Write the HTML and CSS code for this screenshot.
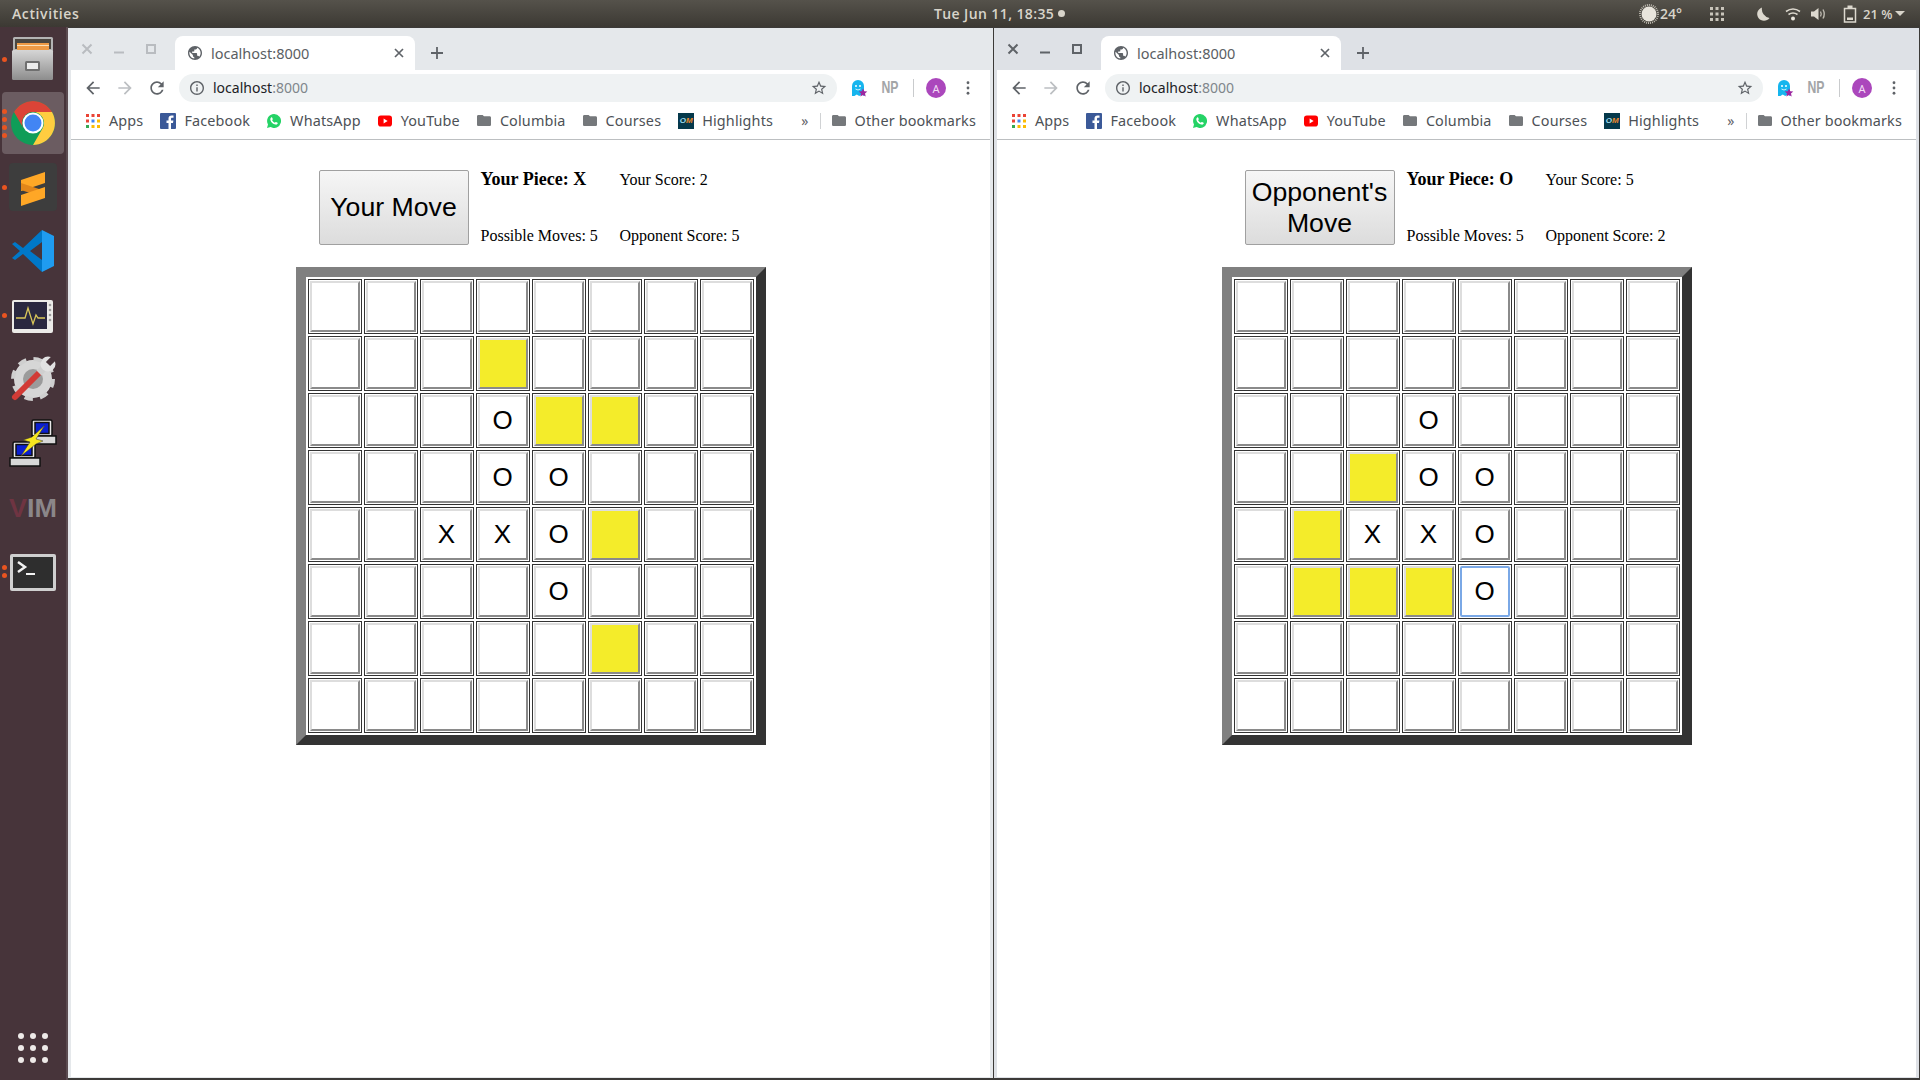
FILE: index.html
```html
<!DOCTYPE html>
<html lang="en">
<head>
    <meta charset="UTF-8">
    <title>Desktop</title>
    <link rel="stylesheet" href="styles.css">
</head>
<body>
    <!-- shared icons -->
    <svg class="sprite" xmlns="http://www.w3.org/2000/svg">
        <symbol id="i-close" viewBox="0 0 12 12"><path d="M1.5 1.5l9 9M10.5 1.5l-9 9" fill="none" stroke="currentColor" stroke-width="2"/></symbol>
        <symbol id="i-min" viewBox="0 0 12 12"><path d="M1 9.5h10" fill="none" stroke="currentColor" stroke-width="2"/></symbol>
        <symbol id="i-max" viewBox="0 0 12 12"><path d="M2 2h8v8H2z" fill="none" stroke="currentColor" stroke-width="2"/></symbol>
        <symbol id="i-globe" viewBox="2 2 20 20"><path fill="currentColor" d="M12 2C6.48 2 2 6.48 2 12s4.48 10 10 10 10-4.48 10-10S17.52 2 12 2zm-1 17.93c-3.95-.49-7-3.85-7-7.93 0-.62.08-1.21.21-1.79L9 15v1c0 1.1.9 2 2 2v1.93zm6.9-2.54c-.26-.81-1-1.39-1.9-1.39h-1v-3c0-.55-.45-1-1-1H8v-2h2c.55 0 1-.45 1-1V7h2c1.1 0 2-.9 2-2v-.41c2.93 1.19 5 4.06 5 7.41 0 2.08-.8 3.97-2.1 5.39z"/></symbol>
        <symbol id="i-tabx" viewBox="0 0 12 12"><path d="M2 2l8 8M10 2l-8 8" fill="none" stroke="currentColor" stroke-width="1.7"/></symbol>
        <symbol id="i-plus" viewBox="0 0 12 12"><path d="M6 0v12M0 6h12" fill="none" stroke="currentColor" stroke-width="1.8"/></symbol>
        <symbol id="i-back" viewBox="0 0 24 24"><path fill="currentColor" d="M20 11H7.83l5.59-5.59L12 4l-8 8 8 8 1.41-1.41L7.83 13H20v-2z"/></symbol>
        <symbol id="i-forward" viewBox="0 0 24 24"><path fill="currentColor" d="M12 4l-1.41 1.41L16.17 11H4v2h12.17l-5.58 5.59L12 20l8-8z"/></symbol>
        <symbol id="i-reload" viewBox="0 0 24 24"><path fill="currentColor" d="M17.65 6.35C16.2 4.9 14.21 4 12 4c-4.42 0-7.99 3.58-7.99 8s3.57 8 7.99 8c3.73 0 6.84-2.55 7.73-6h-2.08c-.82 2.33-3.04 4-5.65 4-3.31 0-6-2.69-6-6s2.69-6 6-6c1.66 0 3.14.69 4.22 1.78L13 11h7V4l-2.35 2.35z"/></symbol>
        <symbol id="i-info" viewBox="2 2 20 20"><path fill="currentColor" d="M11 7h2v2h-2zm0 4h2v6h-2zm1-9C6.48 2 2 6.48 2 12s4.48 10 10 10 10-4.48 10-10S17.52 2 12 2zm0 18c-4.41 0-8-3.59-8-8s3.59-8 8-8 8 3.59 8 8-3.59 8-8 8z"/></symbol>
        <symbol id="i-star" viewBox="1 1 22 22"><path fill="currentColor" d="M22 9.24l-7.19-.62L12 2 9.19 8.63 2 9.24l5.46 4.73L5.82 21 12 17.27 18.18 21l-1.63-7.03L22 9.24zM12 15.4l-3.76 2.27 1-4.28-3.32-2.88 4.38-.38L12 6.1l1.71 4.04 4.38.38-3.32 2.88 1 4.28L12 15.4z"/></symbol>
        <symbol id="i-ghost" viewBox="0 0 18 18">
            <path fill="#16b5ee" d="M2 17V7a6 6 0 0 1 12 0v10l-2.4-1.6L9.2 17l-2.4-1.6L4.4 17z"/>
            <circle cx="6" cy="7" r="1" fill="#fff"/><circle cx="10" cy="7" r="1" fill="#fff"/>
            <path d="M5.5 10q2.5 2 5 0" fill="none" stroke="#fff" stroke-width=".8"/>
            <path fill="#9c27a0" d="M13 9.5l1.3 2.8 3 .3-2.3 2 .7 3-2.7-1.6-2.7 1.6.7-3-2.3-2 3-.3z"/>
        </symbol>
        <symbol id="i-dots" viewBox="0 0 4 16"><circle cx="2" cy="2" r="1.6" fill="currentColor"/><circle cx="2" cy="8" r="1.6" fill="currentColor"/><circle cx="2" cy="14" r="1.6" fill="currentColor"/></symbol>
        <symbol id="i-apps" viewBox="0 0 14 14">
            <path fill="#ea4335" d="M0 0h3v3H0zM5.500 0h3v3h-3zM11 0h3v3h-3zM0 5.500h3v3H0z"/>
            <path fill="#4285f4" d="M5.500 5.500h3v3h-3z"/>
            <path fill="#fbbc05" d="M11 5.500h3v3h-3zM5.500 11h3v3h-3zM11 11h3v3h-3z"/>
            <path fill="#34a853" d="M0 11h3v3H0z"/>
        </symbol>
        <symbol id="i-facebook" viewBox="0 0 16 16"><rect width="16" height="16" rx="1" fill="#3b5998"/><path fill="#fff" d="M11 16V10h2l.4-2.500H11V6c0-.8.3-1.200 1.200-1.200h1.300V2.600C13 2.500 12.300 2.500 11.600 2.500 9.700 2.500 8.500 3.600 8.500 5.600v1.900H6.500V10h2v6z"/></symbol>
        <symbol id="i-whatsapp" viewBox="0 0 14 14">
            <path fill="#25d366" d="M7 0a7 7 0 0 0-6 10.500L0 14l3.600-.9A7 7 0 1 0 7 0z"/>
            <path fill="#fff" d="M4.200 3.400c.3-.3.700-.2.900.1l.7 1.400c.1.300 0 .5-.2.700l-.5.600c.6 1.200 1.500 2 2.700 2.600l.6-.6c.2-.2.500-.3.700-.2l1.400.7c.3.200.4.500.2.900-.4.900-1.300 1.300-2.300 1-2.500-.6-4.300-2.300-5-4.700-.2-1 .1-1.900.8-2.500z"/>
        </symbol>
        <symbol id="i-youtube" viewBox="0 0 15 12"><rect width="15" height="12" rx="3" fill="#f00"/><path fill="#fff" d="M6 3.300L10.300 6 6 8.700z"/></symbol>
        <symbol id="i-folder" viewBox="2 4 20 16"><path fill="currentColor" d="M10 4H4c-1.100 0-2 .9-2 2v12c0 1.100.9 2 2 2h16c1.100 0 2-.9 2-2V8c0-1.100-.9-2-2-2h-8l-2-2z"/></symbol>
    </svg>

    <header class="topbar">
        <div class="activities">Activities</div>
        <div class="clock">Tue Jun 11, 18:35<span class="clock-dot"></span></div>
        <div class="tray">
            <svg class="tray-sun" viewBox="0 0 20 20"><circle cx="10" cy="10" r="9" fill="none" stroke="#bdb9af" stroke-width="2" stroke-dasharray="1 1"/><circle cx="10" cy="10" r="7.500" fill="#e9e5dc"/></svg>
            <span class="tray-temp">24°</span>
            <svg class="tray-grid" viewBox="0 0 14 14"><g fill="#c9c5bb"><path d="M0 0h3v3H0zM5.500 0h3v3h-3zM11 0h3v3h-3zM0 5.500h3v3H0zM5.500 5.500h3v3h-3zM11 5.500h3v3h-3zM0 11h3v3H0zM5.500 11h3v3h-3zM11 11h3v3h-3z"/></g></svg>
            <svg class="tray-moon" viewBox="0 0 16 16"><path fill="#dcd8ce" d="M7 1.500a6.800 6.800 0 1 0 7.500 10.500A9 9 0 0 1 7 1.500z"/></svg>
            <svg class="tray-wifi" viewBox="0 0 16 14"><g fill="none" stroke="#dcd8ce" stroke-width="1.600"><path d="M1 4.500q7-5 14 0"/><path d="M3.500 7.500q4.500-3 9 0"/></g><circle cx="8" cy="11.500" r="2" fill="#e9e5dc"/></svg>
            <svg class="tray-sound" viewBox="0 0 16 14"><path fill="#dcd8ce" d="M0 4.500h3L7.500 1v12L3 9.500H0z"/><g fill="none" stroke="#bdb9af" stroke-width="1.400"><path d="M9.500 4.500q1.500 2.500 0 5"/><path d="M12 2.500q2.500 4.500 0 9"/></g></svg>
            <svg class="tray-battery" viewBox="0 0 14 18"><path d="M1.500 3.500h11v13.500h-11z" fill="none" stroke="#dcd8ce" stroke-width="1.500"/><path d="M4.500 0.500h5v3h-5zM4 12.500h6v2.500H4z" fill="#dcd8ce"/></svg>
            <span class="tray-percent">21 %</span>
            <span class="tray-caret"></span>
        </div>
    </header>

    <div class="desktop">
        <nav class="dock">
            <div class="dock-item">
                <span class="pips"><i></i></span>
                <svg class="dock-icon" viewBox="0 0 48 48">
                    <defs><linearGradient id="cabinet" x1="0" y1="0" x2="0" y2="1"><stop offset="0" stop-color="#d6d6d6"/><stop offset="1" stop-color="#8d8d8d"/></linearGradient></defs>
                    <rect x="4" y="2" width="40" height="16" rx="1.500" fill="#b4b4b4"/>
                    <rect x="6" y="4" width="36" height="10" fill="#4b4640"/>
                    <rect x="8" y="8" width="32" height="7" fill="#ee9a45"/>
                    <rect x="8" y="10" width="32" height="1" fill="#fbe0b8"/>
                    <rect x="3" y="15" width="41" height="30" rx="1.500" fill="url(#cabinet)"/>
                    <rect x="16" y="26" width="15" height="10" rx="1.500" fill="#6f6f6f"/>
                    <rect x="18" y="28" width="11" height="6" fill="#ececec"/>
                </svg>
            </div>
            <div class="dock-item dock-item-active">
                <span class="pips"><i></i><i></i><i></i><i></i></span>
                <svg class="dock-icon" viewBox="0 0 48 48">
                    <circle cx="24" cy="24" r="22" fill="#0f9d58"/>
                    <path fill="#db4437" d="M5 13A22 22 0 0 1 43 13H24A11 11 0 0 0 14.500 29.500z"/>
                    <path fill="#ffcd40" d="M43 13A22 22 0 0 1 24 46L33.500 29.500A11 11 0 0 0 24 13z"/>
                    <circle cx="24" cy="24" r="10.500" fill="#fff"/>
                    <circle cx="24" cy="24" r="8.500" fill="#4285f4"/>
                </svg>
            </div>
            <div class="dock-item">
                <span class="pips"><i></i></span>
                <svg class="dock-icon" viewBox="0 0 48 48">
                    <rect width="48" height="48" rx="4" fill="#3d3d3d"/>
                    <path fill="#ffa726" d="M12 17L36 9V20L12 28z"/>
                    <path fill="#e2861a" d="M12 20L36 28V35L12 27z"/>
                    <path fill="#ffa726" d="M12 32L36 24V35L12 43z"/>
                </svg>
            </div>
            <div class="dock-item">
                <svg class="dock-icon" viewBox="0 0 48 48">
                    <path fill="#0078c8" d="M33 3L14 21 6 15 3 17 11 24 3 31 6 33 14 27 33 45V33L21 24 33 15z"/>
                    <path fill="#1f9cf0" d="M33 3L45 9V39L33 45z"/>
                </svg>
            </div>
            <div class="dock-item">
                <span class="pips"><i></i></span>
                <svg class="dock-icon" viewBox="0 0 48 48">
                    <rect x="3" y="9" width="41" height="33" rx="2" fill="#ecebe8"/>
                    <rect x="5" y="11" width="33" height="27" fill="#2a2840"/>
                    <path d="M7 27H16L19 17 24 33 27 24 29 27H36" fill="none" stroke="#d9c65a" stroke-width="1.300"/>
                    <g fill="#9a9a9a"><circle cx="41" cy="14" r="1.300"/><circle cx="41" cy="19" r="1.300"/><circle cx="41" cy="24" r="1.300"/><circle cx="41" cy="29" r="1.300"/></g>
                </svg>
            </div>
            <div class="dock-item">
                <svg class="dock-icon" viewBox="0 0 48 48">
                    <circle cx="24" cy="24" r="19" fill="#dcdcdc" stroke="#cfcfcf" stroke-width="6" stroke-dasharray="8 6.900"/>
                    <circle cx="24" cy="24" r="18" fill="#d6d6d6"/>
                    <circle cx="24" cy="24" r="10" fill="#9b9b9b"/>
                    <path d="M6 42L32 16" stroke="#d23b36" stroke-width="6" stroke-linecap="round"/>
                    <path d="M30 18L37 11" stroke="#cfcfcf" stroke-width="7"/>
                    <circle cx="39" cy="9" r="7.500" fill="#e2e2e2"/>
                    <path d="M39 9L47 1" stroke="#47343a" stroke-width="6"/>
                </svg>
            </div>
            <div class="dock-item">
                <svg class="dock-icon" viewBox="0 0 48 48">
                    <g stroke="#111" stroke-width="1.500">
                        <rect x="23" y="1" width="20" height="16" rx="1.500" fill="#e8e8e8"/>
                        <rect x="26" y="3.500" width="14" height="11" fill="#0a1fd0"/>
                        <path d="M23 17H47V25H23z" fill="#d8d8d8"/>
                        <rect x="4" y="23" width="22" height="16" rx="1.500" fill="#e8e8e8"/>
                        <rect x="7" y="25.500" width="16" height="11" fill="#0a1fd0"/>
                        <path d="M1 39H31V47H1z" fill="#d8d8d8"/>
                    </g>
                    <path fill="#f6e61f" stroke="#333" stroke-width=".5" d="M36 6L23 18 14 21 21 23 12 37 27 25 34 22 27 20z"/>
                </svg>
            </div>
            <div class="dock-item">
                <svg class="dock-icon" viewBox="0 0 48 48">
                    <text x="0" y="34" textLength="48" lengthAdjust="spacingAndGlyphs" class="vim-text"><tspan class="vim-v">V</tspan>IM</text>
                </svg>
            </div>
            <div class="dock-item">
                <span class="pips"><i></i><i></i></span>
                <svg class="dock-icon" viewBox="0 0 48 48">
                    <rect x="1" y="7" width="46" height="37" rx="2" fill="#cfcfcf"/>
                    <rect x="4" y="10" width="40" height="31" fill="#2e2e2e"/>
                    <path d="M9 15l7 5-7 5" fill="none" stroke="#f2f2f2" stroke-width="2.500"/>
                    <path d="M17 27H26" stroke="#f2f2f2" stroke-width="2"/>
                </svg>
            </div>
            <svg class="dock-apps" viewBox="0 0 30 30"><g fill="#eeeae8"><circle cx="3" cy="3" r="3"/><circle cx="15" cy="3" r="3"/><circle cx="27" cy="3" r="3"/><circle cx="3" cy="15" r="3"/><circle cx="15" cy="15" r="3"/><circle cx="27" cy="15" r="3"/><circle cx="3" cy="27" r="3"/><circle cx="15" cy="27" r="3"/><circle cx="27" cy="27" r="3"/></g></svg>
        </nav>

        <!-- player X -->
        <section class="window window-inactive">
            <div class="tabstrip">
                <div class="win-controls">
                    <svg class="win-btn"><use href="#i-close"/></svg>
                    <svg class="win-btn"><use href="#i-min"/></svg>
                    <svg class="win-btn"><use href="#i-max"/></svg>
                </div>
                <div class="tab">
                    <svg class="tab-favicon"><use href="#i-globe"/></svg>
                    <span class="tab-title">localhost:8000</span>
                    <svg class="tab-close"><use href="#i-tabx"/></svg>
                </div>
                <svg class="new-tab"><use href="#i-plus"/></svg>
            </div>
            <div class="toolbar">
                <svg class="nav-btn"><use href="#i-back"/></svg>
                <svg class="nav-btn nav-btn-off"><use href="#i-forward"/></svg>
                <svg class="nav-btn"><use href="#i-reload"/></svg>
                <div class="omnibox">
                    <svg class="omni-info"><use href="#i-info"/></svg>
                    <span class="omni-url">localhost<span class="omni-port">:8000</span></span>
                    <svg class="omni-star"><use href="#i-star"/></svg>
                </div>
                <svg class="ext-ghost"><use href="#i-ghost"/></svg>
                <span class="ext-np">NP</span>
                <span class="tool-sep"></span>
                <span class="avatar">A</span>
                <svg class="menu-dots"><use href="#i-dots"/></svg>
            </div>
            <div class="bookmarks">
                <a class="bm"><svg class="bm-icon"><use href="#i-apps"/></svg>Apps</a>
                <a class="bm"><svg class="bm-icon bm-icon-16"><use href="#i-facebook"/></svg>Facebook</a>
                <a class="bm"><svg class="bm-icon"><use href="#i-whatsapp"/></svg>WhatsApp</a>
                <a class="bm"><svg class="bm-icon"><use href="#i-youtube"/></svg>YouTube</a>
                <a class="bm"><svg class="bm-icon bm-folder"><use href="#i-folder"/></svg>Columbia</a>
                <a class="bm"><svg class="bm-icon bm-folder"><use href="#i-folder"/></svg>Courses</a>
                <a class="bm"><span class="bm-om"><b>O</b>M</span>Highlights</a>
                <span class="bm-more">»</span>
                <span class="bm-sep"></span>
                <a class="bm bm-other"><svg class="bm-icon bm-folder"><use href="#i-folder"/></svg>Other bookmarks</a>
            </div>
            <main class="page">
                <div class="game">
                    <div class="status">
                        <button class="move-btn">Your Move</button>
                        <div class="info">
                            <strong>Your Piece: X</strong>
                            <span>Your Score: 2</span>
                            <span>Possible Moves: 5</span>
                            <span>Opponent Score: 5</span>
                        </div>
                    </div>
                    <table class="board">
                        <tr><td><button class="sq"></button></td><td><button class="sq"></button></td><td><button class="sq"></button></td><td><button class="sq"></button></td><td><button class="sq"></button></td><td><button class="sq"></button></td><td><button class="sq"></button></td><td><button class="sq"></button></td></tr>
                        <tr><td><button class="sq"></button></td><td><button class="sq"></button></td><td><button class="sq"></button></td><td><button class="sq sq-hint"></button></td><td><button class="sq"></button></td><td><button class="sq"></button></td><td><button class="sq"></button></td><td><button class="sq"></button></td></tr>
                        <tr><td><button class="sq"></button></td><td><button class="sq"></button></td><td><button class="sq"></button></td><td><button class="sq">O</button></td><td><button class="sq sq-hint"></button></td><td><button class="sq sq-hint"></button></td><td><button class="sq"></button></td><td><button class="sq"></button></td></tr>
                        <tr><td><button class="sq"></button></td><td><button class="sq"></button></td><td><button class="sq"></button></td><td><button class="sq">O</button></td><td><button class="sq">O</button></td><td><button class="sq"></button></td><td><button class="sq"></button></td><td><button class="sq"></button></td></tr>
                        <tr><td><button class="sq"></button></td><td><button class="sq"></button></td><td><button class="sq">X</button></td><td><button class="sq">X</button></td><td><button class="sq">O</button></td><td><button class="sq sq-hint"></button></td><td><button class="sq"></button></td><td><button class="sq"></button></td></tr>
                        <tr><td><button class="sq"></button></td><td><button class="sq"></button></td><td><button class="sq"></button></td><td><button class="sq"></button></td><td><button class="sq">O</button></td><td><button class="sq"></button></td><td><button class="sq"></button></td><td><button class="sq"></button></td></tr>
                        <tr><td><button class="sq"></button></td><td><button class="sq"></button></td><td><button class="sq"></button></td><td><button class="sq"></button></td><td><button class="sq"></button></td><td><button class="sq sq-hint"></button></td><td><button class="sq"></button></td><td><button class="sq"></button></td></tr>
                        <tr><td><button class="sq"></button></td><td><button class="sq"></button></td><td><button class="sq"></button></td><td><button class="sq"></button></td><td><button class="sq"></button></td><td><button class="sq"></button></td><td><button class="sq"></button></td><td><button class="sq"></button></td></tr>
                    </table>
                </div>
            </main>
        </section>

        <!-- player O -->
        <section class="window">
            <div class="tabstrip">
                <div class="win-controls">
                    <svg class="win-btn"><use href="#i-close"/></svg>
                    <svg class="win-btn"><use href="#i-min"/></svg>
                    <svg class="win-btn"><use href="#i-max"/></svg>
                </div>
                <div class="tab">
                    <svg class="tab-favicon"><use href="#i-globe"/></svg>
                    <span class="tab-title">localhost:8000</span>
                    <svg class="tab-close"><use href="#i-tabx"/></svg>
                </div>
                <svg class="new-tab"><use href="#i-plus"/></svg>
            </div>
            <div class="toolbar">
                <svg class="nav-btn"><use href="#i-back"/></svg>
                <svg class="nav-btn nav-btn-off"><use href="#i-forward"/></svg>
                <svg class="nav-btn"><use href="#i-reload"/></svg>
                <div class="omnibox">
                    <svg class="omni-info"><use href="#i-info"/></svg>
                    <span class="omni-url">localhost<span class="omni-port">:8000</span></span>
                    <svg class="omni-star"><use href="#i-star"/></svg>
                </div>
                <svg class="ext-ghost"><use href="#i-ghost"/></svg>
                <span class="ext-np">NP</span>
                <span class="tool-sep"></span>
                <span class="avatar">A</span>
                <svg class="menu-dots"><use href="#i-dots"/></svg>
            </div>
            <div class="bookmarks">
                <a class="bm"><svg class="bm-icon"><use href="#i-apps"/></svg>Apps</a>
                <a class="bm"><svg class="bm-icon bm-icon-16"><use href="#i-facebook"/></svg>Facebook</a>
                <a class="bm"><svg class="bm-icon"><use href="#i-whatsapp"/></svg>WhatsApp</a>
                <a class="bm"><svg class="bm-icon"><use href="#i-youtube"/></svg>YouTube</a>
                <a class="bm"><svg class="bm-icon bm-folder"><use href="#i-folder"/></svg>Columbia</a>
                <a class="bm"><svg class="bm-icon bm-folder"><use href="#i-folder"/></svg>Courses</a>
                <a class="bm"><span class="bm-om"><b>O</b>M</span>Highlights</a>
                <span class="bm-more">»</span>
                <span class="bm-sep"></span>
                <a class="bm bm-other"><svg class="bm-icon bm-folder"><use href="#i-folder"/></svg>Other bookmarks</a>
            </div>
            <main class="page">
                <div class="game">
                    <div class="status">
                        <button class="move-btn">Opponent's Move</button>
                        <div class="info">
                            <strong>Your Piece: O</strong>
                            <span>Your Score: 5</span>
                            <span>Possible Moves: 5</span>
                            <span>Opponent Score: 2</span>
                        </div>
                    </div>
                    <table class="board">
                        <tr><td><button class="sq"></button></td><td><button class="sq"></button></td><td><button class="sq"></button></td><td><button class="sq"></button></td><td><button class="sq"></button></td><td><button class="sq"></button></td><td><button class="sq"></button></td><td><button class="sq"></button></td></tr>
                        <tr><td><button class="sq"></button></td><td><button class="sq"></button></td><td><button class="sq"></button></td><td><button class="sq"></button></td><td><button class="sq"></button></td><td><button class="sq"></button></td><td><button class="sq"></button></td><td><button class="sq"></button></td></tr>
                        <tr><td><button class="sq"></button></td><td><button class="sq"></button></td><td><button class="sq"></button></td><td><button class="sq">O</button></td><td><button class="sq"></button></td><td><button class="sq"></button></td><td><button class="sq"></button></td><td><button class="sq"></button></td></tr>
                        <tr><td><button class="sq"></button></td><td><button class="sq"></button></td><td><button class="sq sq-hint"></button></td><td><button class="sq">O</button></td><td><button class="sq">O</button></td><td><button class="sq"></button></td><td><button class="sq"></button></td><td><button class="sq"></button></td></tr>
                        <tr><td><button class="sq"></button></td><td><button class="sq sq-hint"></button></td><td><button class="sq">X</button></td><td><button class="sq">X</button></td><td><button class="sq">O</button></td><td><button class="sq"></button></td><td><button class="sq"></button></td><td><button class="sq"></button></td></tr>
                        <tr><td><button class="sq"></button></td><td><button class="sq sq-hint"></button></td><td><button class="sq sq-hint"></button></td><td><button class="sq sq-hint"></button></td><td><button class="sq sq-focus">O</button></td><td><button class="sq"></button></td><td><button class="sq"></button></td><td><button class="sq"></button></td></tr>
                        <tr><td><button class="sq"></button></td><td><button class="sq"></button></td><td><button class="sq"></button></td><td><button class="sq"></button></td><td><button class="sq"></button></td><td><button class="sq"></button></td><td><button class="sq"></button></td><td><button class="sq"></button></td></tr>
                        <tr><td><button class="sq"></button></td><td><button class="sq"></button></td><td><button class="sq"></button></td><td><button class="sq"></button></td><td><button class="sq"></button></td><td><button class="sq"></button></td><td><button class="sq"></button></td><td><button class="sq"></button></td></tr>
                    </table>
                </div>
            </main>
        </section>
    </div>
</body>
</html>
```

FILE: styles.css
```css
* {
    box-sizing: border-box;
}

html, body {
    margin: 0;
    height: 100%;
    overflow: hidden;
}

body {
    display: flex;
    flex-direction: column;
    background: #3c3a38;
    font-family: "Noto Sans", sans-serif;
}

.sprite {
    display: block;
    width: 0;
    height: 0;
}

/* top bar */
.topbar {
    display: grid;
    grid-template-columns: 934px auto 1fr;
    align-items: center;
    height: 27px;
    flex-shrink: 0;
    background: linear-gradient(#55524b, #3c3933);
    color: #d8d4ca;
    font-family: "Open Sans", sans-serif;
    font-size: 13px;
    font-weight: 600;
}

.activities {
    padding-left: 12px;
    font-size: 14px;
    letter-spacing: 0.6px;
}

.clock {
    display: flex;
    align-items: center;
    font-size: 14px;
    letter-spacing: 0.4px;
}

.clock-dot {
    width: 7px;
    height: 7px;
    margin-left: 4px;
    border-radius: 50%;
    background: #d8d4ca;
}

.tray {
    display: flex;
    align-items: center;
    justify-content: flex-end;
    padding-right: 15px;
}

.tray-sun { width: 20px; height: 20px; }
.tray-temp { width: 22px; margin-left: 1px; font-size: 14px; }
.tray-grid { width: 14px; height: 14px; margin-left: 28px; }
.tray-moon { width: 16px; height: 16px; margin-left: 31px; }
.tray-wifi { width: 16px; height: 14px; margin-left: 14px; }
.tray-sound { width: 16px; height: 14px; margin-left: 10px; }
.tray-battery { width: 14px; height: 18px; margin-left: 16px; }
.tray-percent { width: 28px; margin-left: 6px; white-space: nowrap; }

.tray-caret {
    width: 0;
    height: 0;
    margin-left: 4px;
    border-left: 5px solid transparent;
    border-right: 5px solid transparent;
    border-top: 5px solid #d8d4ca;
}

.desktop {
    display: flex;
    flex: 1;
    min-height: 0;
    padding-top: 1px;
    padding-bottom: 2px;
}

/* dock */
.dock {
    display: flex;
    flex-direction: column;
    align-items: stretch;
    width: 68px;
    margin-top: -1px;
    margin-bottom: -2px;
    flex-shrink: 0;
    background: #47343a;
    border-right: 2px solid #5b4b50;
}

.dock-item {
    position: relative;
    display: flex;
    align-items: center;
    justify-content: center;
    height: 64px;
}

.dock-item-active::before {
    content: "";
    position: absolute;
    inset: 1px 2px;
    border-radius: 4px;
    background: rgba(255, 255, 255, 0.2);
}

.dock-icon {
    position: relative;
    width: 48px;
    height: 48px;
}

.pips {
    position: absolute;
    top: 0;
    bottom: 0;
    left: 2px;
    display: flex;
    flex-direction: column;
    justify-content: center;
    gap: 3px;
}

.pips i {
    display: block;
    width: 5px;
    height: 5px;
    border-radius: 50%;
    background: #e95420;
}

.vim-text {
    font-family: "Liberation Sans", sans-serif;
    font-size: 25px;
    font-weight: 700;
    fill: #8b8789;
}

.vim-v {
    fill: #6f3442;
}

.dock-apps {
    width: 30px;
    height: 30px;
    margin: auto 0 17px 18px;
}

/* browser window */
.window {
    display: flex;
    flex-direction: column;
    width: 925px;
    flex-shrink: 0;
    padding: 0 3px 1px;
    background: #dee1e6;
    color: #5f6368;
}

.window + .window {
    margin-left: 1px;
}

.window-inactive {
    background: #e5e8eb;
}

.window-inactive .win-btn {
    color: #b9bcc0;
}

.tabstrip {
    display: flex;
    align-items: center;
    height: 42px;
    flex-shrink: 0;
}

.win-controls {
    display: flex;
    width: 104px;
}

.win-btn {
    width: 32px;
    height: 12px;
    color: #5f6368;
}

.tab {
    display: flex;
    align-items: center;
    align-self: flex-end;
    width: 240px;
    height: 34px;
    padding: 0 10px 0 13px;
    background: #fff;
    border-radius: 8px 8px 0 0;
}

.tab-favicon {
    width: 14px;
    height: 14px;
}

.tab-title {
    margin-left: 9px;
    padding-bottom: 1px;
    font-size: 14.5px;
    color: #5a5e63;
}

.tab-close {
    width: 12px;
    height: 12px;
    margin-left: auto;
}

.new-tab {
    width: 14px;
    height: 12px;
    margin: 8px 0 0 15px;
}

.toolbar {
    display: flex;
    align-items: center;
    height: 36px;
    padding-left: 6px;
    flex-shrink: 0;
    background: #fff;
}

.nav-btn {
    width: 32px;
    height: 20px;
    color: #5f6368;
}

.nav-btn-off {
    color: #bcbfc2;
}

.omnibox {
    display: flex;
    align-items: center;
    width: 658px;
    height: 28px;
    margin-left: 6px;
    padding: 0 10px 0 11px;
    background: #eff2f3;
    border-radius: 14px;
}

.omni-info {
    width: 14px;
    height: 14px;
}

.omni-url {
    margin-left: 9px;
    padding-bottom: 1px;
    font-size: 14px;
    color: #202124;
}

.omni-port {
    color: #80868b;
}

.omni-star {
    width: 16px;
    height: 16px;
    margin-left: auto;
}

.ext-ghost {
    width: 18px;
    height: 18px;
    margin-left: 13px;
}

.ext-np {
    width: 24px;
    margin-left: 10px;
    text-align: center;
    font-family: "Liberation Sans", sans-serif;
    font-size: 17px;
    font-weight: 700;
    color: #a3a5a7;
    transform: scaleX(0.72);
}

.tool-sep {
    width: 1px;
    height: 18px;
    margin-left: 11px;
    background: #c9cbcd;
}

.avatar {
    display: flex;
    align-items: center;
    justify-content: center;
    width: 20px;
    height: 20px;
    margin-left: 12px;
    border-radius: 50%;
    background: #ab47bc;
    color: #f1dcf4;
    font-size: 11px;
}

.menu-dots {
    width: 4px;
    height: 14px;
    margin-left: 20px;
}

.bookmarks {
    display: flex;
    align-items: center;
    height: 34px;
    padding: 0 0 4px 15px;
    flex-shrink: 0;
    background: #fff;
    border-bottom: 1px solid #bcbfc1;
    font-size: 14.4px;
    letter-spacing: 0.15px;
    color: #4d5156;
}

.bm {
    display: flex;
    align-items: center;
    margin-right: 17px;
    white-space: nowrap;
}

.bm-icon {
    width: 14px;
    height: 14px;
    margin-right: 9px;
}

.bm-icon-16 {
    width: 16px;
    height: 16px;
    margin-right: 8px;
}

.bm-folder {
    color: #75787b;
    height: 13px;
}

.bm-om {
    width: 16px;
    height: 16px;
    margin-right: 8px;
    background: #05394b;
    color: #f08a2c;
    font-family: "Liberation Sans", sans-serif;
    font-size: 8px;
    font-weight: 700;
    font-style: italic;
    line-height: 16px;
    text-align: center;
    letter-spacing: 0;
}

.bm-om b {
    color: #9fdcf0;
}

.bm-more {
    margin-left: auto;
    font-size: 14px;
    color: #5f6368;
}

.bm-sep {
    width: 1px;
    height: 16px;
    margin: 0 11px 0 11px;
    background: #d0d2d4;
}

.bm-other {
    margin-right: 14px;
}

/* the game page */
.page {
    flex: 1;
    display: flex;
    justify-content: center;
    padding-top: 30px;
    background: #fff;
    color: #000;
}

.game {
    width: 470px;
}

.status {
    display: flex;
    gap: 12px;
    height: 75px;
    margin: 0 0 22px 23px;
    font-family: "Liberation Serif", serif;
    font-size: 16px;
}

.move-btn {
    width: 150px;
    height: 75px;
    padding: 0 4px;
    background: linear-gradient(#f6f6f6, #dcdcdc);
    border: 1px solid #a0a0a0;
    border-radius: 2px;
    color: #000;
    font-family: "Liberation Sans", sans-serif;
    font-size: 26.67px;
}

.info {
    display: grid;
    grid-template-columns: 139px auto;
    align-content: space-between;
    align-items: baseline;
    height: 75px;
    line-height: 18px;
}

.info strong {
    font-size: 18px;
}

.board {
    border-collapse: separate;
    border-spacing: 2px;
    background: #fff;
    border: 10px solid;
    border-color: #808080 #333 #333 #808080;
}

.board td {
    padding: 1px;
    border: 1px solid #333;
}

.sq {
    display: block;
    width: 50px;
    height: 51px;
    padding: 0;
    background: #fff;
    border: 2px solid;
    border-color: #ddd #8a8a8a #8a8a8a #ddd;
    color: #000;
    font-family: "Liberation Sans", sans-serif;
    font-size: 26px;
}

.sq-hint {
    background: #f4ec2a;
}

.sq-focus {
    border-color: #7aa8e6;
    border-radius: 2px;
}
```
